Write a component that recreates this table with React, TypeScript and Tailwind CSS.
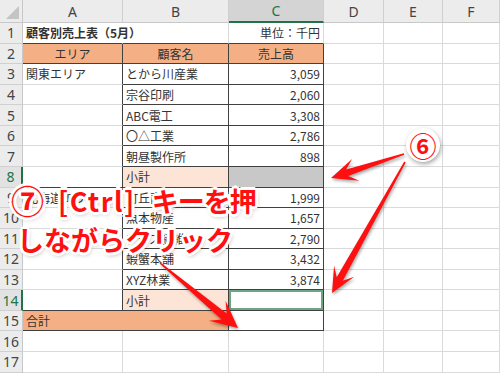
import React from 'react';

const ROWS = 17;
const COLS = ['A', 'B', 'C', 'D', 'E', 'F'];

type CellDef = {
  text?: string;
  align?: 'left' | 'center' | 'right';
  bold?: boolean;
  bg?: string;
  r?: boolean; // 右の罫線（濃）
  b?: boolean; // 下の罫線（濃）
  noR?: boolean;
  span?: number;
  extra?: string;
};

const ORANGE = 'bg-[#f4b084]';
const PALE = 'bg-[#fce4d6]';

// 表の中身（行番号 → 列ごとのセル）
const data: Record<number, CellDef[]> = {
  1: [
    { text: '顧客別売上表（5月）', bold: true, noR: true, b: true, extra: 'overflow-visible z-10' },
    { b: true },
    { text: '単位：千円', align: 'right', b: true },
  ],
  2: [
    { text: 'エリア', align: 'center', bg: ORANGE, r: true, b: true },
    { text: '顧客名', align: 'center', bg: ORANGE, r: true, b: true },
    { text: '売上高', align: 'center', bg: ORANGE, r: true, b: true },
  ],
  3: [
    { text: '関東エリア', r: true },
    { text: 'とから川産業', r: true, b: true },
    { text: '3,059', align: 'right', r: true, b: true },
  ],
  4: [{ r: true }, { text: '宗谷印刷', r: true, b: true }, { text: '2,060', align: 'right', r: true, b: true }],
  5: [{ r: true }, { text: 'ABC電工', r: true, b: true }, { text: '3,308', align: 'right', r: true, b: true }],
  6: [{ r: true }, { text: '〇△工業', r: true, b: true }, { text: '2,786', align: 'right', r: true, b: true }],
  7: [{ r: true }, { text: '朝昼製作所', r: true, b: true }, { text: '898', align: 'right', r: true, b: true }],
  8: [
    { r: true, b: true },
    { text: '小計', bg: PALE, r: true, b: true },
    { bg: 'bg-[#c8c8c8]', r: true, b: true },
  ],
  9: [
    { text: '北海道エリア', r: true },
    { text: '町丘商店', r: true, b: true },
    { text: '1,999', align: 'right', r: true, b: true },
  ],
  10: [{ r: true }, { text: '魚本物産', r: true, b: true }, { text: '1,657', align: 'right', r: true, b: true }],
  11: [{ r: true }, { text: 'アクス繊維', r: true, b: true }, { text: '2,790', align: 'right', r: true, b: true }],
  12: [{ r: true }, { text: '蝦蟹本舗', r: true, b: true }, { text: '3,432', align: 'right', r: true, b: true }],
  13: [{ r: true }, { text: 'XYZ林業', r: true, b: true }, { text: '3,874', align: 'right', r: true, b: true }],
  14: [
    { r: true, b: true },
    { text: '小計', bg: PALE, r: true, b: true },
    { r: true, b: true, extra: 'shadow-[inset_0_0_0_2px_#6fa584]' },
  ],
  15: [
    { text: '合計', span: 2, bg: ORANGE, r: true, b: true },
    { r: true, b: true },
  ],
};

function arrowPath(tx: number, ty: number, hx: number, hy: number, headLen = 26, headHalf = 12, neck = 17, shaftHalf = 3.5) {
  const dx = hx - tx;
  const dy = hy - ty;
  const len = Math.hypot(dx, dy);
  const ux = dx / len;
  const uy = dy / len;
  const px = -uy;
  const py = ux;
  const pt = (a: number, b: number) => `${(hx - ux * a + px * b).toFixed(1)},${(hy - uy * a + py * b).toFixed(1)}`;
  const tail = (b: number) => `${(tx + px * b).toFixed(1)},${(ty + py * b).toFixed(1)}`;
  return `M${tail(0.8)} L${pt(neck, shaftHalf)} L${pt(headLen, headHalf)} L${hx},${hy} L${pt(headLen, -headHalf)} L${pt(neck, -shaftHalf)} L${tail(-0.8)} Z`;
}

function Cell({ def }: { def?: CellDef }) {
  const d = def ?? {};
  const justify = d.align === 'right' ? 'justify-end' : d.align === 'center' ? 'justify-center' : 'justify-start';
  const rCls = d.r ? 'border-r-[#404040]' : d.noR ? 'border-r-transparent' : 'border-r-[#dadada]';
  const bCls = d.b ? 'border-b-[#404040]' : 'border-b-[#dadada]';
  return (
    <div
      className={`relative flex items-center whitespace-nowrap border-r border-b px-[3px] pt-[1px] text-[12px] text-[#333] ${rCls} ${bCls} ${justify} ${
        d.bold ? 'font-bold' : ''
      } ${d.span === 2 ? 'col-span-2' : ''} ${d.bg ?? ''} ${d.extra ?? ''}`}
    >
      {d.text}
    </div>
  );
}

export default function App() {
  const rows = Array.from({ length: ROWS }, (_, i) => i + 1);
  const outline =
    '[text-shadow:3px_0_0_#fff,-3px_0_0_#fff,0_3px_0_#fff,0_-3px_0_#fff,2px_2px_0_#fff,-2px_-2px_0_#fff,2px_-2px_0_#fff,-2px_2px_0_#fff,1px_2px_5px_rgba(0,0,0,0.45)]';

  return (
    <div className="relative h-[373px] w-[500px] overflow-hidden bg-white font-['Noto_Sans_CJK_JP','Noto_Sans',sans-serif]">
      <div className="grid grid-cols-[23px_100px_106px_95px_60px_59px_57px] grid-rows-[23px_repeat(17,20.57px)]">
        {/* 左上の角 */}
        <div className="relative border-r border-b border-r-[#c8c8c8] border-b-[#c8c8c8] bg-[#ececec]">
          <svg className="absolute right-[3px] bottom-[3px]" width="13" height="13" viewBox="0 0 13 13">
            <path d="M13 0 L13 13 L0 13 Z" fill="#c4c4c4" />
          </svg>
        </div>
        {COLS.map((c) => (
          <div
            key={c}
            className={`flex items-center justify-center border-r border-r-[#d0d0d0] font-['Noto_Sans',sans-serif] text-[14px] ${
              c === 'C'
                ? 'border-b-2 border-b-[#217346] bg-[#d4d4d4] text-[#217346]'
                : 'border-b border-b-[#c8c8c8] bg-[#ececec] text-[#444]'
            }`}
          >
            {c}
          </div>
        ))}
        {rows.map((r) => {
          const sel = r === 8 || r === 14;
          const cells = data[r] ?? [];
          const out: React.ReactNode[] = [];
          let col = 0;
          cells.forEach((def, i) => {
            out.push(<Cell key={`${r}-${i}`} def={def} />);
            col += def.span ?? 1;
          });
          while (col < 6) {
            out.push(<Cell key={`${r}-e${col}`} />);
            col++;
          }
          return (
            <React.Fragment key={r}>
              <div
                className={`flex items-center justify-center border-b border-b-[#d0d0d0] font-['Noto_Sans',sans-serif] text-[14px] ${
                  sel
                    ? 'border-r-2 border-r-[#217346] bg-[#e2e2e2] text-[#217346]'
                    : 'border-r border-r-[#c8c8c8] bg-[#ececec] text-[#444]'
                }`}
              >
                {r}
              </div>
              {out}
            </React.Fragment>
          );
        })}
      </div>

      {/* 矢印 */}
      <svg
        className="pointer-events-none absolute inset-0 drop-shadow-[1px_2px_1.5px_rgba(0,0,0,0.35)]"
        width="500"
        height="373"
        viewBox="0 0 500 373"
      >
        <path d={arrowPath(404, 154, 331, 178, 26, 11.5, 17, 3.5)} fill="#ff1010" />
        <path d={arrowPath(405, 162, 332, 293, 25, 11.5, 16, 3.5)} fill="#ff1010" />
        <path d={arrowPath(160, 263, 238, 328, 27, 13, 18, 4)} fill="#ff1010" />
      </svg>

      {/* ⑥ */}
      <div className="absolute left-[406px] top-[128px] flex h-[34px] w-[34px] items-center justify-center rounded-full bg-white text-[27px] font-bold leading-none text-[#ff1010] shadow-[1px_2px_4px_rgba(0,0,0,0.35)]">
        ⑥
      </div>

      {/* 注釈テキスト */}
      <div
        className={`absolute left-[11px] top-[181px] text-[27px] font-bold leading-[39px] whitespace-nowrap text-[#ff1010] ${outline}`}
      >
        <div className="flex items-center">
          <span className="text-[33px] leading-[39px]">⑦</span>
          <span className="ml-[14px] tracking-[1.5px]">[Ctrl]</span>
          <span className="ml-[16px] tracking-[-1px]">キーを押</span>
        </div>
        <div className="pl-[6px]">しながらクリック</div>
      </div>
    </div>
  );
}
